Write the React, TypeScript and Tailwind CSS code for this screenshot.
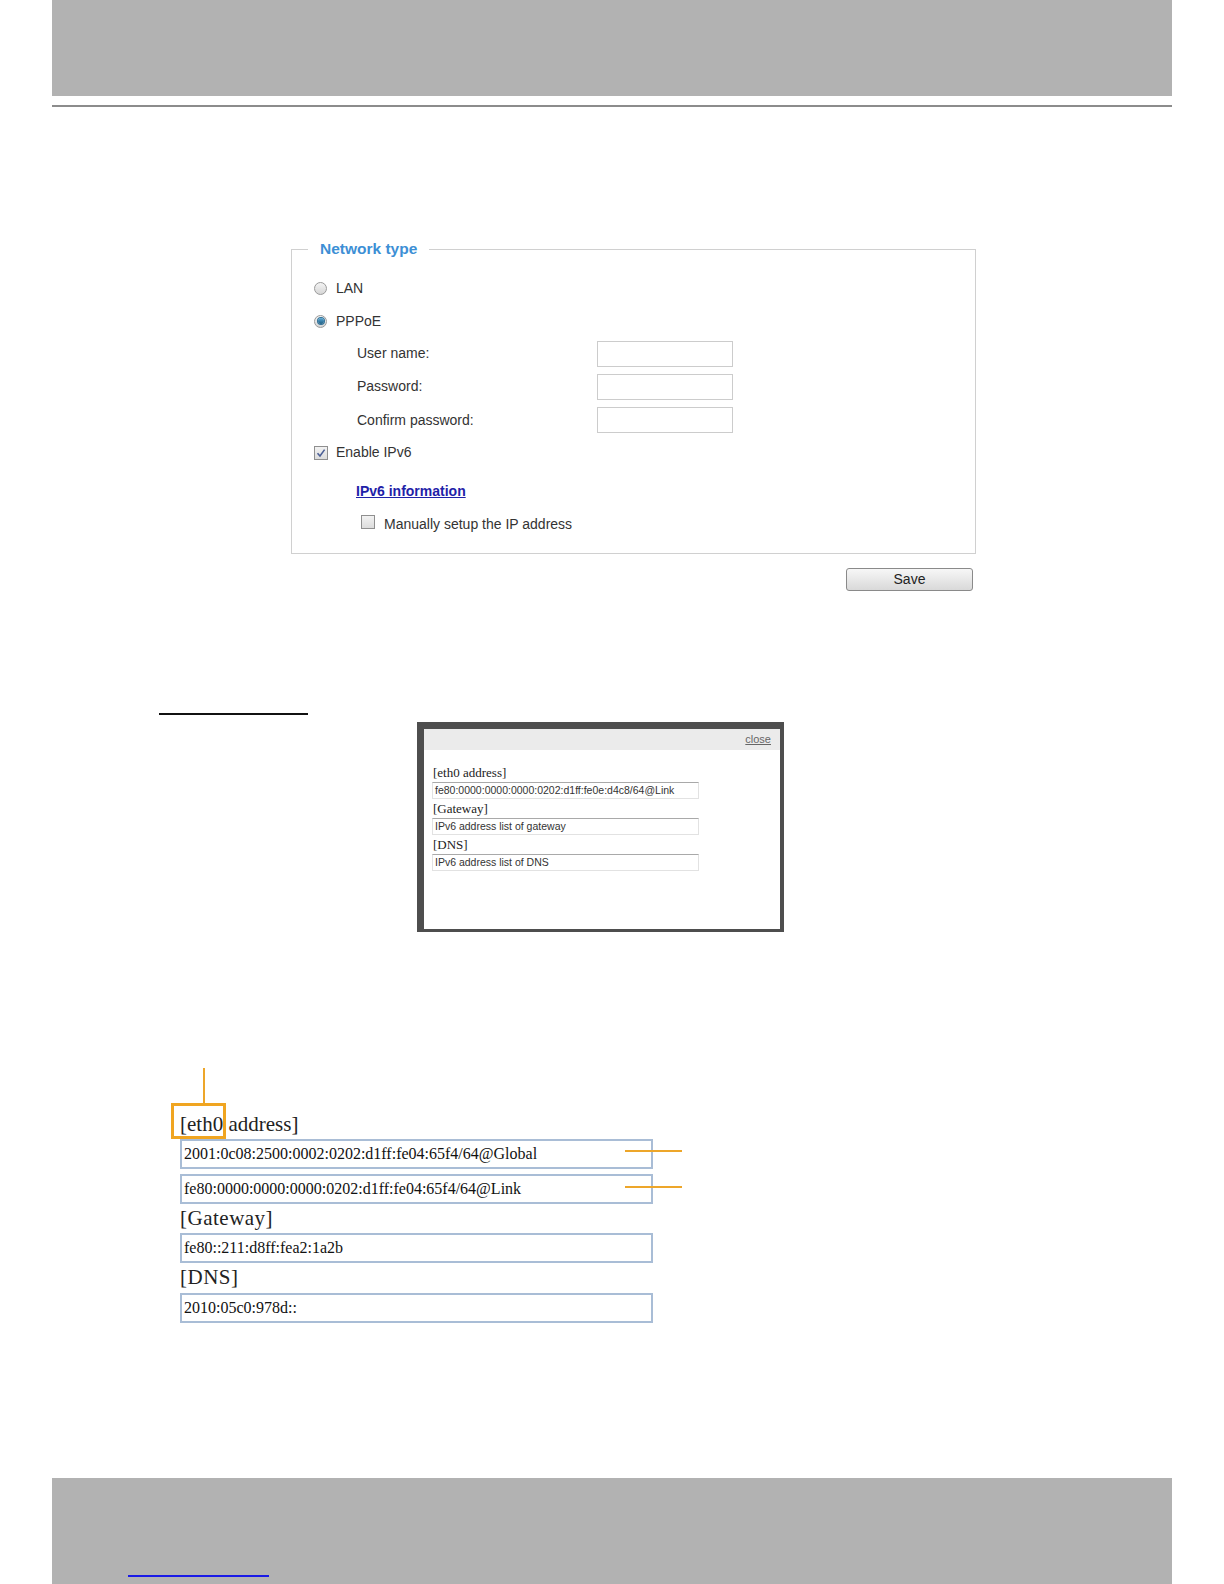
import React from 'react';

const sans = { fontFamily: '"Liberation Sans", Arial, sans-serif' };
const serif = { fontFamily: '"Liberation Serif", "Times New Roman", serif' };

const Radio: React.FC<{ checked?: boolean }> = ({ checked }) => (
  <span className="inline-flex h-[13px] w-[13px] items-center justify-center rounded-full border border-[#9a9a9a] bg-gradient-to-b from-[#f4f4f4] to-[#d6d6d6]">
    {checked && (
      <span className="h-[6px] w-[6px] rounded-full bg-gradient-to-b from-[#5aa9d6] to-[#1d5e84] ring-1 ring-[#2f6f96]" />
    )}
  </span>
);

const Checkbox: React.FC<{ checked?: boolean }> = ({ checked }) => (
  <span className="inline-flex h-[14px] w-[14px] items-center justify-center border border-[#8f8f8f] bg-gradient-to-b from-[#f2f2f2] to-[#dcdcdc]">
    {checked && (
      <svg width="10" height="10" viewBox="0 0 10 10">
        <path d="M1.5 5.2 L4 8 L8.6 1.6" fill="none" stroke="#4b5f96" strokeWidth="1.6" />
      </svg>
    )}
  </span>
);

const FieldRow: React.FC<{ label: string; className?: string }> = ({ label, className }) => (
  <div className={`flex items-center ${className ?? 'h-[33px]'}`}>
    <span className="ml-[43px] w-[240px] text-[14px] text-[#333]">{label}</span>
    <div className="h-[26px] w-[136px] border border-[#cccccc] bg-white" />
  </div>
);

const PopupInput: React.FC<{ value: string }> = ({ value }) => (
  <div className="ml-[8px] mt-[2px] flex h-[17px] w-[267px] items-center border border-[#e2e2e2] border-t-[#a9a9a9] pl-[2px] text-[10.5px] text-[#333]" style={sans}>
    {value}
  </div>
);

const BigInput: React.FC<{ value: string; className?: string }> = ({ value, className }) => (
  <div className={`ml-[9px] flex h-[30px] w-[473px] items-center border-2 border-[#a9bdd6] pl-[2px] text-[16px] text-[#111] ${className ?? ''}`} style={serif}>
    {value}
  </div>
);

const App: React.FC = () => {
  return (
    <div className="flex h-[1584px] w-[1224px] flex-col bg-white" style={sans}>
      {/* Header band */}
      <div className="mx-[52px] h-[96px] bg-[#b2b2b2]" />
      <div className="mx-[52px] mt-[9px] h-[2px] bg-[#8c8c8c]" />

      {/* Network type */}
      <fieldset className="ml-[291px] mt-[133px] w-[685px] border border-[#d0d0d0] pb-[20px] pl-[22px]">
        <legend className="px-[12px] text-[15.5px] font-bold leading-[18px] text-[#3d8fd5]" style={{ marginLeft: -6 }}>
          Network type
        </legend>
        <div className="mt-[13px] flex h-[34px] items-center gap-[9px]">
          <Radio />
          <span className="text-[14px] text-[#333]">LAN</span>
        </div>
        <div className="flex h-[32px] items-center gap-[9px]">
          <Radio checked />
          <span className="text-[14px] text-[#333]">PPPoE</span>
        </div>
        <FieldRow label="User name:" />
        <FieldRow label="Password:" />
        <FieldRow label="Confirm password:" className="h-[34px]" />
        <div className="flex h-[31px] items-center gap-[8px]">
          <Checkbox checked />
          <span className="text-[14px] text-[#333]">Enable IPv6</span>
        </div>
        <div className="flex h-[47px] items-center">
          <span className="ml-[42px] text-[14px] font-bold text-[#1f22a8] underline">IPv6 information</span>
        </div>
        <div className="flex h-[18px] items-center">
          <span className="ml-[47px]">
            <Checkbox />
          </span>
          <span className="ml-[9px] text-[14px] text-[#333]">Manually setup the IP address</span>
        </div>
      </fieldset>

      <div className="ml-[291px] mt-[14px] flex w-[685px]">
        <button className="ml-auto mr-[3px] h-[23px] w-[127px] rounded-[3px] border border-[#8a8a8a] bg-gradient-to-b from-[#f7f7f7] to-[#d9d9d9] text-[14px] leading-[21px] text-[#222]">
          Save
        </button>
      </div>

      {/* Section underline */}
      <div className="ml-[159px] mt-[122px] h-[2px] w-[149px] bg-[#111]" />

      {/* IPv6 information popup */}
      <div className="ml-[417px] mt-[7px] h-[210px] w-[367px] bg-[#4e4e4e] pb-[3px] pl-[7px] pr-[4px] pt-[7px]">
        <div className="h-full w-full bg-white">
          <div className="flex h-[21px] items-center justify-end bg-[#ebebeb] pr-[9px]">
            <span className="text-[11px] text-[#666] underline">close</span>
          </div>
          <div className="ml-[9px] mt-[16px] text-[13px] leading-[14px] text-[#222]" style={serif}>[eth0 address]</div>
          <PopupInput value="fe80:0000:0000:0000:0202:d1ff:fe0e:d4c8/64@Link" />
          <div className="ml-[9px] mt-[3px] text-[13px] leading-[14px] text-[#222]" style={serif}>[Gateway]</div>
          <PopupInput value="IPv6 address list of gateway" />
          <div className="ml-[9px] mt-[3px] text-[13px] leading-[14px] text-[#222]" style={serif}>[DNS]</div>
          <PopupInput value="IPv6 address list of DNS" />
        </div>
      </div>

      {/* Enlarged illustration */}
      <div className="relative ml-[171px] mt-[136px] w-[520px] pt-[35px]" style={serif}>
        <div className="flex h-[36px] items-center pl-[9px] pt-[8px] text-[21px] text-[#222]">[eth0 address]</div>
        <BigInput value="2001:0c08:2500:0002:0202:d1ff:fe04:65f4/64@Global" />
        <BigInput value="fe80:0000:0000:0000:0202:d1ff:fe04:65f4/64@Link" className="mt-[5px]" />
        <div className="flex h-[29px] items-center pl-[9px] text-[21px] tracking-[0.5px] text-[#222]">[Gateway]</div>
        <BigInput value="fe80::211:d8ff:fea2:1a2b" />
        <div className="flex h-[30px] items-center pl-[9px] text-[21px] tracking-[0.5px] text-[#222]">[DNS]</div>
        <BigInput value="2010:05c0:978d::" />

        {/* annotations */}
        <div className="absolute left-[32px] top-0 h-[35px] w-[1.5px] bg-[#eda62a]" />
        <div className="absolute left-0 top-[35px] h-[36px] w-[55px] border-[3px] border-[#f0a521]" />
        <div className="absolute left-[454px] top-[82px] h-[1.5px] w-[57px] bg-[#eda62a]" />
        <div className="absolute left-[454px] top-[118px] h-[1.5px] w-[57px] bg-[#eda62a]" />
      </div>

      {/* Footer band */}
      <div className="mx-[52px] mt-auto flex h-[106px] flex-col bg-[#b2b2b2]">
        <div className="mb-[7px] ml-[76px] mt-auto h-[2px] w-[141px] bg-[#1a1ae6]" />
      </div>
    </div>
  );
};

export default App;
